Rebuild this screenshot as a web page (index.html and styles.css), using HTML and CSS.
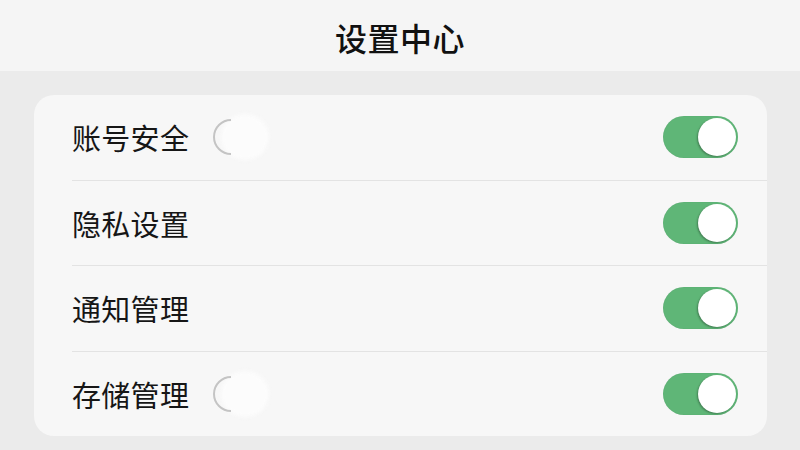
FILE: index.html
```html
<!DOCTYPE html>
<html lang="zh-CN">
<head>
<meta charset="utf-8">
<title>设置中心</title>
<link rel="stylesheet" href="styles.css">
</head>
<body>
<header class="topbar"><h1 class="title">设置中心</h1></header>
<main class="content">
  <section class="card">
    <div class="row">
      <span class="label">账号安全</span>
      <svg class="ghost" width="80" height="56" viewBox="0 0 80 56" aria-hidden="true">
        <ellipse class="ghost-fill" cx="42" cy="28" rx="24" ry="23" fill="#fcfcfc"/>
        <path d="M28 11 A17 17 0 0 0 28 45" fill="none" stroke="#c4c4c4" stroke-width="2"/>
      </svg>
      <span class="toggle on"><span class="knob"></span></span>
    </div>
    <div class="row">
      <span class="label">隐私设置</span>
      <span class="toggle on"><span class="knob"></span></span>
    </div>
    <div class="row">
      <span class="label">通知管理</span>
      <span class="toggle on"><span class="knob"></span></span>
    </div>
    <div class="row">
      <span class="label">存储管理</span>
      <svg class="ghost" width="80" height="56" viewBox="0 0 80 56" aria-hidden="true">
        <ellipse class="ghost-fill" cx="42" cy="28" rx="24" ry="23" fill="#fcfcfc"/>
        <path d="M28 11 A17 17 0 0 0 28 45" fill="none" stroke="#c4c4c4" stroke-width="2"/>
      </svg>
      <span class="toggle on"><span class="knob"></span></span>
    </div>
  </section>
</main>
</body>
</html>
```
FILE: styles.css
```css
* { box-sizing: border-box; }
html, body { margin: 0; padding: 0; }
body {
  width: 800px;
  height: 450px;
  overflow: hidden;
  background: #ebebeb;
  font-family: "Noto Sans CJK SC", "Noto Sans", sans-serif;
  color: #111;
}
.topbar {
  height: 71px;
  background: #f5f5f5;
  display: flex;
  align-items: center;
  justify-content: center;
}
.title {
  margin: 0;
  font-size: 32px;
  font-weight: 500;
  line-height: 1;
  letter-spacing: 0.5px;
  transform: translateY(1px);
}
.content {
  padding: 24px 33px 0 34px;
}
.card {
  background: #f7f7f7;
  border-radius: 20px;
  height: 341px;
  padding-left: 38px;
  display: flex;
  flex-direction: column;
}
.row {
  flex: 1;
  display: flex;
  align-items: center;
  border-bottom: 1.5px solid #e3e3e3;
  padding-right: 29px;
}
.row:last-child { border-bottom: none; }
.label {
  font-size: 29px;
  font-weight: 400;
  color: #161616;
  letter-spacing: 0.3px;
}
.ghost {
  margin-left: 14px;
  filter: blur(0.5px);
}
.ghost-fill {
  filter: blur(2px);
}
.toggle {
  margin-left: auto;
  width: 75px;
  height: 42px;
  border-radius: 21px;
  background: #5fb677;
  position: relative;
  box-shadow: inset 0 0 1px rgba(0,0,0,0.15);
}
.knob {
  position: absolute;
  right: 2px;
  top: 2px;
  width: 38px;
  height: 38px;
  border-radius: 50%;
  background: #ffffff;
  box-shadow: -1px 1px 2px rgba(0,0,0,0.3);
}
```
